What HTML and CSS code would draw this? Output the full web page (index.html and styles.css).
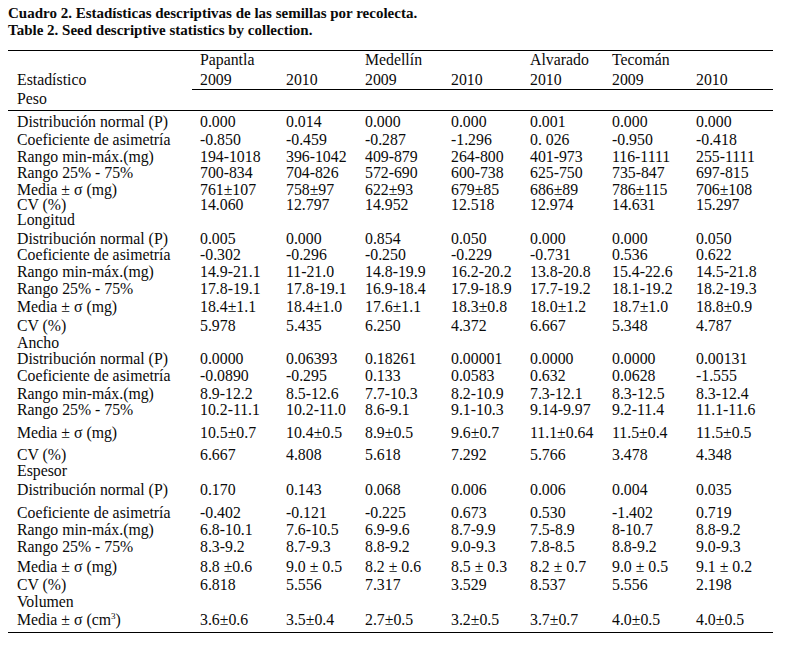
FILE: index.html
```html
<!DOCTYPE html>
<html lang="es">
<head>
<meta charset="utf-8">
<title>Cuadro 2</title>
<link rel="stylesheet" href="styles.css">
</head>
<body>
<div class="caption">
  <p>Cuadro 2. Estadísticas descriptivas de las semillas por recolecta.</p>
  <p>Table 2. Seed descriptive statistics by collection.</p>
</div>
<table class="stats">
  <colgroup>
    <col class="c-label"><col class="c-a"><col class="c-b"><col class="c-a"><col class="c-b"><col class="c-c"><col class="c-d"><col class="c-e">
  </colgroup>
  <thead>
    <tr class="head-groups"><th class="label"></th><th>Papantla</th><th></th><th>Medellín</th><th></th><th>Alvarado</th><th>Tecomán</th><th></th></tr>
    <tr class="head-years"><th class="label">Estadístico</th><th>2009</th><th>2010</th><th>2009</th><th>2010</th><th>2010</th><th>2009</th><th>2010</th></tr>
    <tr class="head-section"><th class="label">Peso</th><th colspan="7"></th></tr>
  </thead>
  <tbody>
    <tr class="sp3"><td class="label">Distribución normal (P)</td><td>0.000</td><td>0.014</td><td>0.000</td><td>0.000</td><td>0.001</td><td>0.000</td><td>0.000</td></tr>
    <tr class="sp3"><td class="label">Coeficiente de asimetría</td><td>-0.850</td><td>-0.459</td><td>-0.287</td><td>-1.296</td><td>0. 026</td><td>-0.950</td><td>-0.418</td></tr>
    <tr><td class="label">Rango min-máx.(mg)</td><td>194-1018</td><td>396-1042</td><td>409-879</td><td>264-800</td><td>401-973</td><td>116-1111</td><td>255-1111</td></tr>
    <tr class="sp1"><td class="label">Rango 25% - 75%</td><td>700-834</td><td>704-826</td><td>572-690</td><td>600-738</td><td>625-750</td><td>735-847</td><td>697-815</td></tr>
    <tr><td class="label">Media ± σ (mg)</td><td>761±107</td><td>758±97</td><td>622±93</td><td>679±85</td><td>686±89</td><td>786±115</td><td>706±108</td></tr>
    <tr class="sp0"><td class="label">CV (%)</td><td>14.060</td><td>12.797</td><td>14.952</td><td>12.518</td><td>12.974</td><td>14.631</td><td>15.297</td></tr>
    <tr class="sp0 section"><td class="label">Longitud</td><td colspan="7"></td></tr>
    <tr class="sp4"><td class="label">Distribución normal (P)</td><td>0.005</td><td>0.000</td><td>0.854</td><td>0.050</td><td>0.000</td><td>0.000</td><td>0.050</td></tr>
    <tr class="sp1"><td class="label">Coeficiente de asimetría</td><td>-0.302</td><td>-0.296</td><td>-0.250</td><td>-0.229</td><td>-0.731</td><td>0.536</td><td>0.622</td></tr>
    <tr><td class="label">Rango min-máx.(mg)</td><td>14.9-21.1</td><td>11-21.0</td><td>14.8-19.9</td><td>16.2-20.2</td><td>13.8-20.8</td><td>15.4-22.6</td><td>14.5-21.8</td></tr>
    <tr><td class="label">Rango 25% - 75%</td><td>17.8-19.1</td><td>17.8-19.1</td><td>16.9-18.4</td><td>17.9-18.9</td><td>17.7-19.2</td><td>18.1-19.2</td><td>18.2-19.3</td></tr>
    <tr class="sp3"><td class="label">Media ± σ (mg)</td><td>18.4±1.1</td><td>18.4±1.0</td><td>17.6±1.1</td><td>18.3±0.8</td><td>18.0±1.2</td><td>18.7±1.0</td><td>18.8±0.9</td></tr>
    <tr class="sp4"><td class="label">CV (%)</td><td>5.978</td><td>5.435</td><td>6.250</td><td>4.372</td><td>6.667</td><td>5.348</td><td>4.787</td></tr>
    <tr class="section"><td class="label">Ancho</td><td colspan="7"></td></tr>
    <tr class="sp1"><td class="label">Distribución normal (P)</td><td>0.0000</td><td>0.06393</td><td>0.18261</td><td>0.00001</td><td>0.0000</td><td>0.0000</td><td>0.00131</td></tr>
    <tr><td class="label">Coeficiente de asimetría</td><td>-0.0890</td><td>-0.295</td><td>0.133</td><td>0.0583</td><td>0.632</td><td>0.0628</td><td>-1.555</td></tr>
    <tr class="sp3"><td class="label">Rango min-máx.(mg)</td><td>8.9-12.2</td><td>8.5-12.6</td><td>7.7-10.3</td><td>8.2-10.9</td><td>7.3-12.1</td><td>8.3-12.5</td><td>8.3-12.4</td></tr>
    <tr class="sp1"><td class="label">Rango 25% - 75%</td><td>10.2-11.1</td><td>10.2-11.0</td><td>8.6-9.1</td><td>9.1-10.3</td><td>9.14-9.97</td><td>9.2-11.4</td><td>11.1-11.6</td></tr>
    <tr class="sp8"><td class="label">Media ± σ (mg)</td><td>10.5±0.7</td><td>10.4±0.5</td><td>8.9±0.5</td><td>9.6±0.7</td><td>11.1±0.64</td><td>11.5±0.4</td><td>11.5±0.5</td></tr>
    <tr class="sp7"><td class="label">CV (%)</td><td>6.667</td><td>4.808</td><td>5.618</td><td>7.292</td><td>5.766</td><td>3.478</td><td>4.348</td></tr>
    <tr class="sp1 section"><td class="label">Espesor</td><td colspan="7"></td></tr>
    <tr class="sp4"><td class="label">Distribución normal (P)</td><td>0.170</td><td>0.143</td><td>0.068</td><td>0.006</td><td>0.006</td><td>0.004</td><td>0.035</td></tr>
    <tr class="sp8"><td class="label">Coeficiente de asimetría</td><td>-0.402</td><td>-0.121</td><td>-0.225</td><td>0.673</td><td>0.530</td><td>-1.402</td><td>0.719</td></tr>
    <tr><td class="label">Rango min-máx.(mg)</td><td>6.8-10.1</td><td>7.6-10.5</td><td>6.9-9.6</td><td>8.7-9.9</td><td>7.5-8.9</td><td>8-10.7</td><td>8.8-9.2</td></tr>
    <tr><td class="label">Rango 25% - 75%</td><td>8.3-9.2</td><td>8.7-9.3</td><td>8.8-9.2</td><td>9.0-9.3</td><td>7.8-8.5</td><td>8.8-9.2</td><td>9.0-9.3</td></tr>
    <tr class="sp5"><td class="label">Media ± σ (mg)</td><td>8.8 ±0.6</td><td>9.0 ± 0.5</td><td>8.2 ± 0.6</td><td>8.5 ± 0.3</td><td>8.2 ± 0.7</td><td>9.0 ± 0.5</td><td>9.1 ± 0.2</td></tr>
    <tr class="sp3"><td class="label">CV (%)</td><td>6.818</td><td>5.556</td><td>7.317</td><td>3.529</td><td>8.537</td><td>5.556</td><td>2.198</td></tr>
    <tr class="section"><td class="label">Volumen</td><td colspan="7"></td></tr>
    <tr class="sp3 last"><td class="label">Media ± σ (cm<sup>3</sup>)</td><td>3.6±0.6</td><td>3.5±0.4</td><td>2.7±0.5</td><td>3.2±0.5</td><td>3.7±0.7</td><td>4.0±0.5</td><td>4.0±0.5</td></tr>
  </tbody>
</table>
</body>
</html>
```

FILE: styles.css
```css
body {
  margin: 0;
  padding: 5px 8px 0;
  background: #fff;
  color: #0a0a0a;
  font-family: "Liberation Serif", "Times New Roman", serif;
}

.caption p {
  margin: 0;
  font-size: 15px;
  line-height: 17px;
  font-weight: bold;
}

.stats {
  margin-top: 11px;
  width: 765px;
  table-layout: fixed;
  border-collapse: separate;
  border-spacing: 0;
  font-size: 15.8px;
}

.c-label { width: 184px; }
.c-a { width: 86px; }
.c-b { width: 79px; }
.c-c { width: 82px; }
.c-d { width: 84px; }
.c-e { width: 85px; }

.stats th,
.stats td {
  padding: 2px 0 0 8px;
  line-height: 15px;
  vertical-align: bottom;
  text-align: left;
  font-weight: normal;
  white-space: nowrap;
}

.stats .label {
  padding-left: 9px;
}

/* header rows */
.head-groups th {
  border-top: 1px solid #000;
  padding-top: 1px;
}

.head-years th {
  padding-top: 5px;
  padding-bottom: 2px;
  border-bottom: 1px solid #000;
}

.head-years th.label {
  border-bottom-color: transparent;
}

.head-section th {
  padding-top: 1px;
  padding-bottom: 4px;
  border-bottom: 1px solid #000;
}

/* row spacing modifiers (space above the row's text) */
.stats tr.sp0 > * { padding-top: 0; }
.stats tr.sp1 > * { padding-top: 1px; }
.stats tr.sp3 > * { padding-top: 3px; }
.stats tr.sp4 > * { padding-top: 4px; }
.stats tr.sp5 > * { padding-top: 5px; }
.stats tr.sp7 > * { padding-top: 7px; }
.stats tr.sp8 > * { padding-top: 8px; }

.stats tr.last > * {
  padding-bottom: 5px;
  border-bottom: 1px solid #000;
}

.stats sup {
  font-size: 9px;
  line-height: 0;
  vertical-align: 6px;
}
```
